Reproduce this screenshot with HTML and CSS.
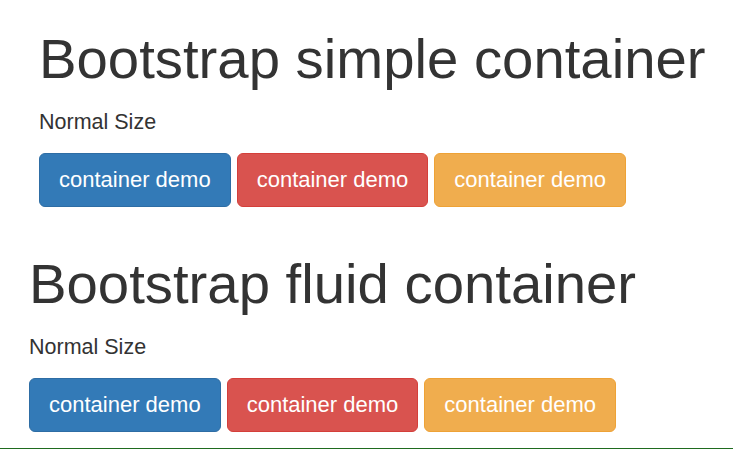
FILE: index.html
```html
<!DOCTYPE html>
<html lang="en">
<head>
<meta charset="utf-8">
<title>Bootstrap containers</title>
<link rel="stylesheet" href="styles.css">
</head>
<body>
<div class="container">
  <h1 class="title">Bootstrap simple container</h1>
  <p class="lead">Normal Size</p>
  <div class="btn-row">
    <button class="btn btn-primary">container demo</button>
    <button class="btn btn-danger">container demo</button>
    <button class="btn btn-warning">container demo</button>
  </div>
</div>
<div class="container-fluid">
  <h1 class="title">Bootstrap fluid container</h1>
  <p class="lead">Normal Size</p>
  <div class="btn-row">
    <button class="btn btn-primary">container demo</button>
    <button class="btn btn-danger">container demo</button>
    <button class="btn btn-warning">container demo</button>
  </div>
</div>
<div class="rule"></div>
</body>
</html>
```
FILE: styles.css
```css
html, body {
  margin: 0;
  padding: 0;
  background: #fff;
}
body {
  font-family: "Liberation Sans", Arial, sans-serif;
  color: #333;
}
.container {
  padding: 28px 0 0 39px;
}
.container-fluid {
  padding: 46px 0 0 29px;
}
.title {
  font-size: 56.3px;
  font-weight: 400;
  line-height: 62px;
  margin: 0 0 18px;
}
.lead {
  font-size: 21.5px;
  line-height: 28px;
  margin: 0 0 17px;
}
.btn-row {
  display: flex;
  gap: 6px;
}
.btn {
  font-family: "Liberation Sans", Arial, sans-serif;
  font-size: 22px;
  line-height: 30px;
  padding: 11px 19px;
  border: 1px solid transparent;
  border-radius: 6px;
  color: #fff;
  cursor: pointer;
  margin: 0;
}
.btn-primary {
  background: #337ab7;
  border-color: #2e6da4;
}
.btn-danger {
  background: #d9534f;
  border-color: #d43f3a;
}
.btn-warning {
  background: #f0ad4e;
  border-color: #eea236;
}
.rule {
  margin-top: 16px;
  border-top: 1px solid #1f6b1f;
}
```
